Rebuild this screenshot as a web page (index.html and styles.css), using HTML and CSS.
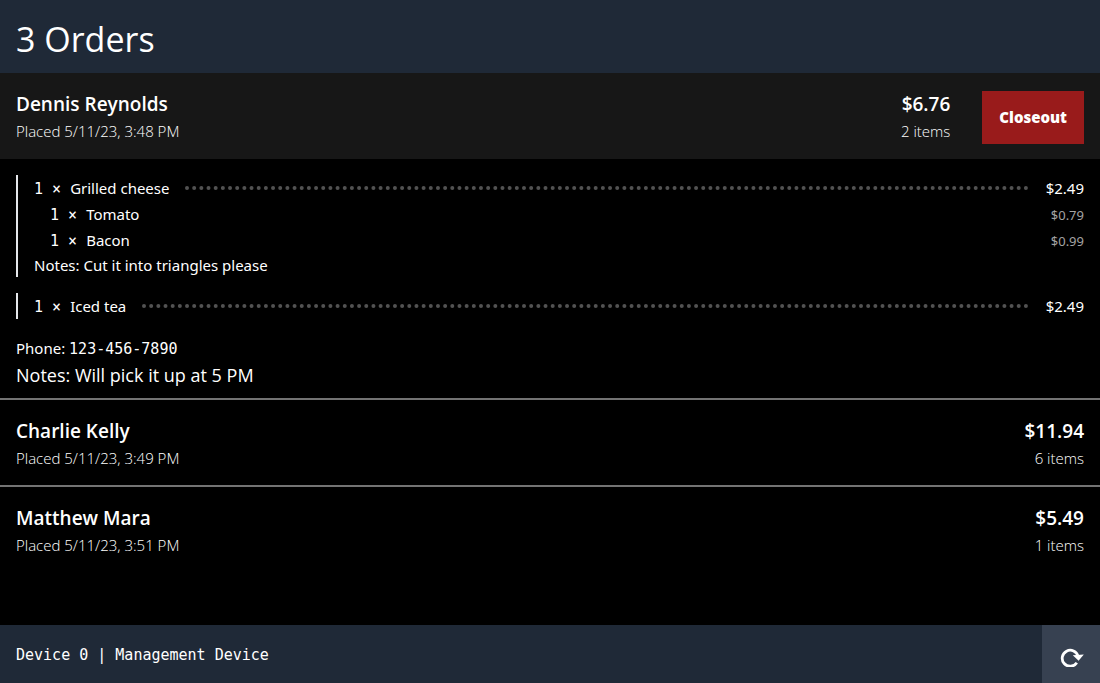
FILE: index.html
```html
<!DOCTYPE html>
<html lang="en">
<head>
<meta charset="utf-8">
<title>Orders</title>
<link rel="stylesheet" href="styles.css">
</head>
<body>
<header class="topbar"><h1 class="title">3 Orders</h1></header>
<main class="orders">
  <article class="order">
    <div class="summary summary-open">
      <div class="who"><h2 class="name">Dennis Reynolds</h2><p class="meta">Placed 5/11/23, 3:48 PM</p></div>
      <div class="total"><p class="amount">$6.76</p><p class="meta">2 items</p></div>
      <button class="closeout" type="button">Closeout</button>
    </div>
    <div class="details">
      <section class="item">
        <div class="line"><span class="qty">1 × </span><span>Grilled cheese</span><svg class="leader" aria-hidden="true"><line x1="2" y1="2" x2="100%" y2="2"/></svg><span class="price">$2.49</span></div>
        <div class="line extra"><span class="qty">1 × </span><span>Tomato</span><span class="addon">$0.79</span></div>
        <div class="line extra"><span class="qty">1 × </span><span>Bacon</span><span class="addon">$0.99</span></div>
        <p class="item-note">Notes: Cut it into triangles please</p>
      </section>
      <section class="item">
        <div class="line"><span class="qty">1 × </span><span>Iced tea</span><svg class="leader" aria-hidden="true"><line x1="2" y1="2" x2="100%" y2="2"/></svg><span class="price">$2.49</span></div>
      </section>
      <div class="contact">
        <p class="phone">Phone: <span class="mono">123-456-7890</span></p>
        <p class="notes">Notes: Will pick it up at 5 PM</p>
      </div>
    </div>
  </article>
  <article class="order">
    <div class="summary">
      <div class="who"><h2 class="name">Charlie Kelly</h2><p class="meta">Placed 5/11/23, 3:49 PM</p></div>
      <div class="total"><p class="amount">$11.94</p><p class="meta">6 items</p></div>
    </div>
  </article>
  <article class="order">
    <div class="summary">
      <div class="who"><h2 class="name">Matthew Mara</h2><p class="meta">Placed 5/11/23, 3:51 PM</p></div>
      <div class="total"><p class="amount">$5.49</p><p class="meta">1 items</p></div>
    </div>
  </article>
</main>
<footer class="bottombar">
  <p class="device"><span class="mono">Device 0 | Management Device</span></p>
  <button class="refresh" type="button" aria-label="Refresh">
    <svg width="24" height="20" viewBox="0 0 24 20" aria-hidden="true"><path d="M16.8 15.8A8 8 0 1 1 18 9.4" fill="none" stroke="#fff" stroke-width="2.8"/><path d="M12.8 8.2 23.8 7.6 18.6 13.8Z" fill="#fff"/></svg>
  </button>
</footer>
</body>
</html>
```
FILE: styles.css
```css
* { box-sizing: border-box; }
h1, h2, p { margin: 0; }
body {
  margin: 0;
  min-height: 100vh;
  display: flex;
  flex-direction: column;
  background: #000;
  color: #fff;
  font: 15px/26px "Segoe UI", "Noto Sans", "Open Sans", sans-serif;
}
button { border: 0; color: #fff; font-family: inherit; cursor: pointer; }
.mono, .qty { font-family: "DejaVu Sans Mono", monospace; font-size: 15px; line-height: 16px; }
.topbar { padding: 15px 16px 9px; background: #1f2937; }
.title { font-family: "Segoe UI", "Open Sans", sans-serif; font-size: 34px; line-height: 49px; font-weight: 400; }
.orders { flex: 1; }
.order + .order { border-top: 2px solid #737373; }
.summary { display: flex; align-items: center; padding: 18px 16px 14px; font-family: "Segoe UI", "Open Sans", sans-serif; }
.summary-open { padding-bottom: 15px; background: #171717; }
.who { flex: 1; }
.name, .amount { font-size: 19px; line-height: 27px; font-weight: 600; }
.meta { font-weight: 300; }
.total { text-align: right; }
.closeout {
  margin-left: 32px;
  padding: 14px 17px;
  background: #991b1b;
  font-size: 15px;
  line-height: 25px;
  font-weight: 900;
}
.details { display: flex; flex-direction: column; gap: 16px; padding: 16px 16px 8px; }
.item { border-left: 2px solid #e5e7eb; padding-left: 16px; }
.item-note { line-height: 24px; }
.line { display: flex; align-items: baseline; }
.extra { padding-left: 16px; }
.qty { white-space: pre; }
.leader { flex: 1; align-self: center; min-width: 0; height: 4px; margin: 0 16px; overflow: visible; }
.leader line { stroke: #525252; stroke-width: 4; stroke-linecap: round; stroke-dasharray: 0 7.17; }
.addon { margin-left: auto; font-size: 13px; line-height: 20px; color: #a3a3a3; }
.notes { font-family: "Segoe UI", "Open Sans", sans-serif; font-size: 18px; line-height: 29px; }
.bottombar { display: flex; align-items: stretch; background: #1f2937; }
.device { flex: 1; padding: 16px; }
.refresh { display: flex; align-items: center; justify-content: center; width: 58px; padding: 6px 0 0 2px; background: #374151; }
```
